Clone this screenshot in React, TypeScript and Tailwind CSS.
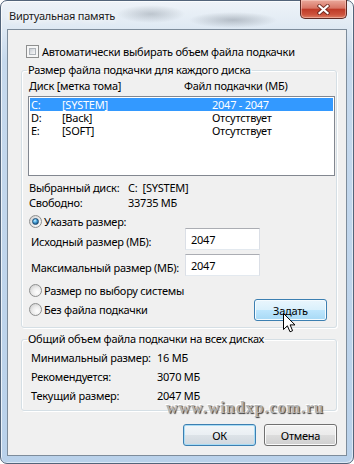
import React from "react";

function CheckBox() {
  return (
    <span className="flex w-[13px] h-[13px] shrink-0 border border-[#8e8f8f] bg-[#f6f6f6] p-[2px]">
      <span className="block w-full h-full border border-[#aeb3b9] bg-[linear-gradient(135deg,#c9cdd3_0%,#e4e6e9_55%,#f7f7f8_100%)]" />
    </span>
  );
}

function Radio({ checked }: { checked?: boolean }) {
  return (
    <span className="flex w-[13px] h-[13px] shrink-0 rounded-full border border-[#8e8f8f] bg-[radial-gradient(circle_at_65%_65%,#ffffff_0%,#ececec_45%,#c4c4c4_100%)] items-center justify-center">
      {checked && (
        <span className="block w-[7px] h-[7px] rounded-full border border-[#1c4c74] bg-[radial-gradient(circle_at_38%_32%,#d2f0ff_0%,#56b2e6_35%,#1f5f92_75%,#123d63_100%)]" />
      )}
    </span>
  );
}

function TextBox({ value }: { value: string }) {
  return (
    <div className="w-[75px] h-[22px] border border-[#abadb3] border-x-[#dbdfe6] border-b-[#e3e9ef] bg-white pl-[5px] pt-[3px]">
      {value}
    </div>
  );
}

const btnNormal =
  "flex items-center justify-center w-[73px] h-[22px] rounded-[3px] border border-[#707070] bg-[linear-gradient(180deg,#f2f2f2_0%,#ebebeb_50%,#dddddd_50%,#cfcfcf_100%)] shadow-[inset_0_0_0_1px_#fbfbfb]";
const btnHover =
  "flex items-center justify-center w-[73px] h-[22px] rounded-[3px] border border-[#3c7fb1] bg-[linear-gradient(180deg,#eaf6fd_0%,#d9f0fc_50%,#bee6fd_50%,#a7d9f5_100%)] shadow-[inset_0_0_0_1px_#f4fbff]";
const btnDefault =
  "flex items-center justify-center w-[73px] h-[22px] rounded-[3px] border border-[#3c7fb1] bg-[linear-gradient(180deg,#f2f6f9_0%,#eaeff3_50%,#dde3e8_50%,#d0d8df_100%)] shadow-[inset_0_0_0_1px_#a9dcf5]";

export default function App() {
  return (
    <div className="w-[354px] h-[464px] overflow-hidden bg-white">
      <div className="relative w-[354px] h-[464px] flex flex-col rounded-[7px] border border-[#52647a] bg-[radial-gradient(ellipse_34px_9px_at_150px_13px,rgba(110,120,132,0.35),transparent),radial-gradient(ellipse_44px_8px_at_232px_19px,rgba(90,100,112,0.35),transparent),linear-gradient(180deg,#eef3f8_0%,#e2ebf4_22px,#c6d9ed_60px,#b9d1ea_100%)] shadow-[inset_1px_1px_0_rgba(255,255,255,0.7),inset_-1px_-1px_0_rgba(255,255,255,0.5)] font-['Noto_Sans',sans-serif] text-[11px] tracking-[-0.25px] leading-[15px] text-black whitespace-nowrap">
        {/* title bar */}
        <div className="flex h-[28px] justify-between shrink-0">
          <div className="ml-[8px] mt-[7px] text-[#1a1a1a] [text-shadow:0_0_6px_#ffffff,0_0_10px_#ffffff]">
            Виртуальная память
          </div>
          <div className="mr-[6px] mt-[-1px] w-[47px] h-[19px] rounded-b-[5px] border border-t-0 border-[#5e2a24] bg-[linear-gradient(180deg,#eaa99b_0%,#d87565_45%,#bf3b28_52%,#cc523c_80%,#dc7d63_100%)] shadow-[inset_0_0_0_1px_rgba(255,220,210,0.45)] flex items-center justify-center">
            <svg width="13" height="11" viewBox="0 0 13 11">
              <path d="M2.5 2 L10.5 9 M10.5 2 L2.5 9" stroke="#5a1e16" strokeOpacity="0.75" strokeWidth="4" strokeLinecap="square" />
              <path d="M2.5 2 L10.5 9 M10.5 2 L2.5 9" stroke="#ffffff" strokeWidth="2.2" strokeLinecap="square" />
            </svg>
          </div>
        </div>

        {/* client area */}
        <div className="flex-1 mx-[6px] mb-[7px] border border-[#7d8c9b] bg-[#f0f0f0] flex flex-col">
          {/* auto checkbox */}
          <div className="flex items-center h-[15px] mt-[14px] ml-[18px] gap-[3px]">
            <CheckBox />
            <span>Автоматически выбирать объем файла подкачки</span>
          </div>

          {/* group 1 */}
          <fieldset className="ml-[13px] w-[316px] mt-[5px] border border-[#d5dfe5] rounded-[3px] pl-[6px] pr-[1px] pb-[6px] shadow-[inset_1px_1px_0_#ffffff,1px_1px_0_#ffffff]">
            <legend className="ml-[-1px] px-[1px] leading-[12px]">
              Размер файла подкачки для каждого диска
            </legend>

            <div className="flex h-[15px] mt-[2px] pl-[1px]">
              <span className="w-[155px]">Диск [метка тома]</span>
              <span>Файл подкачки (МБ)</span>
            </div>

            <div className="mt-[3px] w-[307px] h-[80px] border border-[#828790] bg-white p-[1px] leading-[13px]">
              <div className="flex h-[13px] bg-[#3399ff] text-white pl-[1px]">
                <span className="w-[31px]">C:</span>
                <span className="w-[150px]">[SYSTEM]</span>
                <span>2047 - 2047</span>
              </div>
              <div className="flex h-[13px] pl-[1px]">
                <span className="w-[31px]">D:</span>
                <span className="w-[150px]">[Back]</span>
                <span>Отсутствует</span>
              </div>
              <div className="flex h-[13px] pl-[1px]">
                <span className="w-[31px]">E:</span>
                <span className="w-[150px]">[SOFT]</span>
                <span>Отсутствует</span>
              </div>
            </div>

            <div className="flex h-[15px] mt-[4px] pl-[1px]">
              <span className="w-[99px]">Выбранный диск:</span>
              <span>C:&nbsp;&nbsp;[SYSTEM]</span>
            </div>
            <div className="flex h-[15px] pl-[1px]">
              <span className="w-[99px]">Свободно:</span>
              <span>33735 МБ</span>
            </div>

            <div className="flex items-center h-[14px] mt-[4px] ml-[1px] gap-[2px]">
              <Radio checked />
              <span>Указать размер:</span>
            </div>

            <div className="flex h-[22px]">
              <span className="w-[157px] pl-[3px] pt-[6px]">Исходный размер (МБ):</span>
              <TextBox value="2047" />
            </div>
            <div className="flex h-[22px] mt-[4px]">
              <span className="w-[157px] pl-[3px] pt-[6px]">Максимальный размер (МБ):</span>
              <TextBox value="2047" />
            </div>

            <div className="flex items-center h-[15px] mt-[7px] ml-[1px] gap-[2px]">
              <Radio />
              <span>Размер по выбору системы</span>
            </div>

            <div className="flex justify-between items-start">
              <div className="flex items-center h-[15px] mt-[4px] ml-[1px] gap-[2px]">
                <Radio />
                <span>Без файла подкачки</span>
              </div>
              <div className={`${btnHover} mt-[1px] mr-[8px]`}>Задать</div>
            </div>
          </fieldset>

          {/* group 2 */}
          <fieldset className="ml-[13px] w-[316px] mt-[5px] border border-[#d5dfe5] rounded-[3px] pl-[6px] pr-[1px] pb-[5px] shadow-[inset_1px_1px_0_#ffffff,1px_1px_0_#ffffff]">
            <legend className="ml-[-1px] px-[1px] leading-[12px]">
              Общий объем файла подкачки на всех дисках
            </legend>
            <div className="mt-[3px] leading-[19px]">
              <div className="flex h-[19px] pl-[3px]">
                <span className="w-[126px]">Минимальный размер:</span>
                <span>16 МБ</span>
              </div>
              <div className="flex h-[19px] pl-[3px]">
                <span className="w-[126px]">Рекомендуется:</span>
                <span>3070 МБ</span>
              </div>
              <div className="flex h-[19px] pl-[3px]">
                <span className="w-[126px]">Текущий размер:</span>
                <span>2047 МБ</span>
              </div>
            </div>
          </fieldset>

          {/* bottom buttons */}
          <div className="flex justify-end gap-[8px] mt-[13px] mr-[9px]">
            <div className={btnDefault}>ОК</div>
            <div className={btnNormal}>Отмена</div>
          </div>
        </div>

        {/* watermark */}
        <div className="absolute left-[165px] top-[399px] font-['Liberation_Serif',serif] font-bold text-[16px] leading-[16px] tracking-[1px] text-[#b4b4b4] [text-shadow:1px_1px_1px_#3a3a3a,-1px_-1px_0_#ffffff]">
          www.windxp.com.ru
        </div>

        {/* mouse cursor */}
        <svg className="absolute left-[282px] top-[312px]" width="13" height="20" viewBox="0 0 13 20">
          <path
            d="M0.5 0.5 L0.5 16.5 L4.4 12.8 L7 18.8 L9.6 17.7 L7.1 11.9 L12 11.9 Z"
            fill="#ffffff"
            stroke="#000000"
            strokeWidth="1"
            strokeLinejoin="round"
          />
        </svg>
      </div>
    </div>
  );
}
